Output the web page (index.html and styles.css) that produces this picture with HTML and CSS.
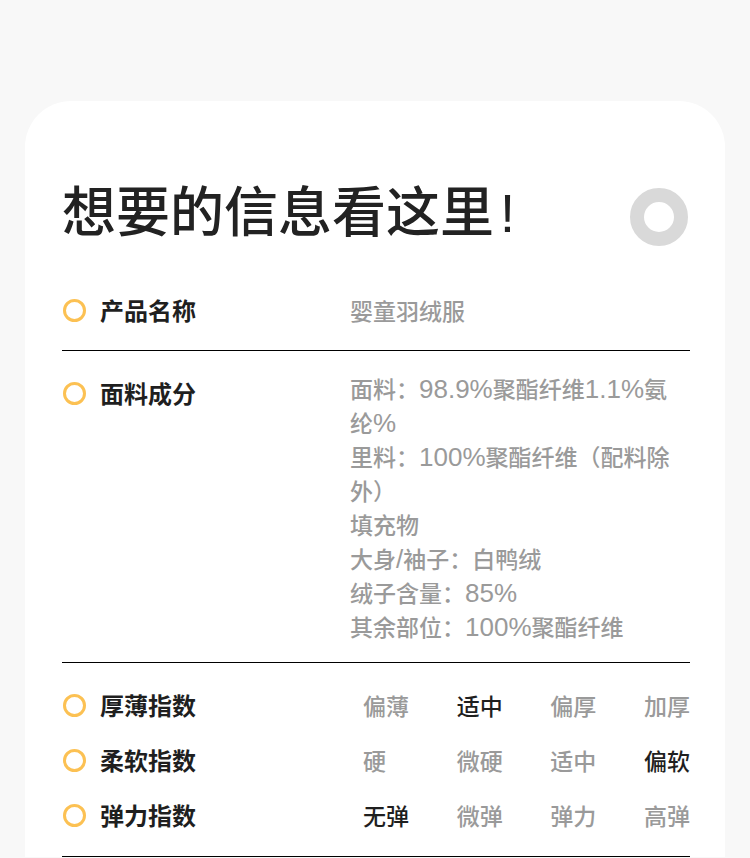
FILE: index.html
```html
<!DOCTYPE html>
<html lang="zh">
<head>
<meta charset="utf-8">
<title>信息</title>
<link rel="stylesheet" href="styles.css">
</head>
<body>
<div class="card">
  <div class="header">
    <h1 class="title"><span>想要的信息看这里</span><span class="excl">!</span></h1>
    <span class="deco-ring"></span>
  </div>

  <div class="row row-first">
    <div class="label"><span class="dot"></span><span class="label-text">产品名称</span></div>
    <div class="value">婴童羽绒服</div>
  </div>

  <div class="row row-multi">
    <div class="label label-offset"><span class="dot"></span><span class="label-text">面料成分</span></div>
    <div class="value">
      <p class="vline"><span>面料：</span><span class="num">98.9%</span><span>聚酯纤维</span><span class="num">1.1%</span><span>氨</span><span>纶</span><span class="num">%</span></p>
      <p class="vline"><span>里料：</span><span class="num">100%</span><span>聚酯纤维（配料除</span><span>外）</span></p>
      <p class="vline"><span>填充物</span></p>
      <p class="vline"><span>大身</span><span class="num">/</span><span>袖子：白鸭绒</span></p>
      <p class="vline"><span>绒子含量：</span><span class="num">85%</span></p>
      <p class="vline"><span>其余部位：</span><span class="num">100%</span><span>聚酯纤维</span></p>
    </div>
  </div>

  <div class="row row-index">
    <div class="index-line">
      <div class="label"><span class="dot"></span><span class="label-text">厚薄指数</span></div>
      <div class="options">
        <span class="opt">偏薄</span>
        <span class="opt opt-on">适中</span>
        <span class="opt">偏厚</span>
        <span class="opt">加厚</span>
      </div>
    </div>
    <div class="index-line">
      <div class="label"><span class="dot"></span><span class="label-text">柔软指数</span></div>
      <div class="options">
        <span class="opt">硬</span>
        <span class="opt">微硬</span>
        <span class="opt">适中</span>
        <span class="opt opt-on">偏软</span>
      </div>
    </div>
    <div class="index-line">
      <div class="label"><span class="dot"></span><span class="label-text">弹力指数</span></div>
      <div class="options">
        <span class="opt opt-on">无弹</span>
        <span class="opt">微弹</span>
        <span class="opt">弹力</span>
        <span class="opt">高弹</span>
      </div>
    </div>
  </div>
</div>
</body>
</html>
```

FILE: styles.css
```css
* { box-sizing: border-box; }
html, body {
  margin: 0;
  padding: 0;
  background: #f8f8f8;
  font-family: "Noto Sans CJK SC", "Noto Sans", sans-serif;
  color: #1f1f1f;
}
.card {
  margin: 101px 25px 0;
  background: #ffffff;
  border-radius: 46px 46px 0 0;
  padding: 81px 35px 0 37px;
}
.header {
  display: flex;
  justify-content: space-between;
  align-items: flex-start;
}
.title {
  margin: 0;
  font-size: 54px;
  line-height: 54px;
  font-weight: 500;
  color: #222222;
}
.excl {
  font-family: "Liberation Sans", sans-serif;
  font-weight: 400;
  padding-left: 6px;
}
.deco-ring {
  width: 58px;
  height: 58px;
  margin-top: 6px;
  margin-right: 2px;
  border: 14px solid #d9d9d9;
  border-radius: 50%;
}
.row {
  display: flex;
  border-bottom: 1px solid #000000;
}
.row-first {
  align-items: center;
  padding: 47px 0 23px;
}
.row-multi {
  align-items: flex-start;
  padding: 20px 0 19px;
}
.row-index {
  flex-direction: column;
  gap: 21px;
  padding: 25px 0 24px;
}
.label {
  width: 288px;
  flex: none;
  display: flex;
  align-items: center;
  height: 34px;
}
.label-offset { margin-top: 5px; }
.dot {
  width: 23px;
  height: 23px;
  border: 3.5px solid #fcc153;
  border-radius: 50%;
  margin-left: 1px;
  margin-right: 14px;
  flex: none;
}
.label-text {
  font-size: 24px;
  line-height: 34px;
  font-weight: 700;
  color: #1f1f1f;
}
.value {
  width: 330px;
  font-size: 23px;
  line-height: 34px;
  font-weight: 500;
  color: #9a9a9a;
}
.vline { margin: 0; }
.num {
  font-family: "Liberation Sans", sans-serif;
  font-size: 26px;
  line-height: 30px;
  font-weight: 400;
}
.index-line {
  display: flex;
  align-items: center;
}
.options {
  flex: 1;
  margin-left: 13px;
  display: flex;
  justify-content: space-between;
}
.opt {
  width: 46px;
  font-size: 23px;
  line-height: 34px;
  font-weight: 500;
  color: #9a9a9a;
  white-space: nowrap;
}
.opt-on { color: #1f1f1f; }
```
